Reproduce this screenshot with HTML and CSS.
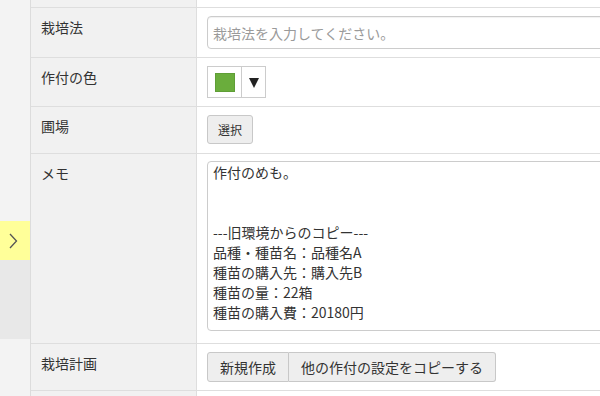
FILE: index.html
```html
<!DOCTYPE html>
<html lang="ja">

<head>
    <meta charset="UTF-8">
    <meta name="viewport" content="width=device-width, initial-scale=1.0">
    <title>作付の編集</title>
    <link rel="stylesheet" href="styles.css">
</head>

<body>
    <aside class="side">
        <div class="side-top"></div>
        <div class="side-tab">
            <svg width="10" height="16" viewBox="0 0 10 16">
                <polyline points="2,1 8.5,8 2,15" fill="none" stroke="#555" stroke-width="1.3" />
            </svg>
        </div>
        <div class="side-dark"></div>
        <div class="side-rest"></div>
    </aside>

    <main class="form-table">
        <div class="row tail">
            <div class="label"></div>
            <div class="value"></div>
        </div>

        <div class="row">
            <div class="label">栽培法</div>
            <div class="value">
                <input class="text-input" placeholder="栽培法を入力してください。">
            </div>
        </div>

        <div class="row">
            <div class="label">作付の色</div>
            <div class="value">
                <div class="color-picker">
                    <span class="swatch-box"><span class="swatch"></span></span>
                    <span class="caret">
                        <svg width="10" height="11" viewBox="0 0 10 11">
                            <polygon points="0,1 10,1 5,11" fill="#222" />
                        </svg>
                    </span>
                </div>
            </div>
        </div>

        <div class="row">
            <div class="label">圃場</div>
            <div class="value pad-field">
                <button class="btn small">選択</button>
            </div>
        </div>

        <div class="row">
            <div class="label">メモ</div>
            <div class="value pad-memo">
                <textarea class="memo">作付のめも。


---旧環境からのコピー---
品種・種苗名：品種名A
種苗の購入先：購入先B
種苗の量：22箱
種苗の購入費：20180円</textarea>
            </div>
        </div>

        <div class="row">
            <div class="label">栽培計画</div>
            <div class="value">
                <div class="btn-group">
                    <button class="btn">新規作成</button>
                    <button class="btn">他の作付の設定をコピーする</button>
                </div>
            </div>
        </div>

        <div class="row">
            <div class="label"></div>
            <div class="value"></div>
        </div>
    </main>
</body>

</html>
```

FILE: styles.css
```css
* {
    box-sizing: border-box;
    font-family: "Noto Sans CJK JP", "Noto Sans", "Liberation Sans", sans-serif;
}

body {
    margin: 0;
    display: flex;
    height: 396px;
    overflow: hidden;
    background: #fff;
    color: #333;
}

.side {
    width: 31px;
    flex-shrink: 0;
    display: flex;
    flex-direction: column;
    border-right: 1px solid #dcdcdc;
}

.side-top {
    height: 221px;
    background: #f3f3f3;
}

.side-tab {
    height: 39px;
    background: #ffff99;
    display: flex;
    align-items: center;
    padding-left: 8px;
}

.side-dark {
    height: 79px;
    background: #e8e8e8;
}

.side-rest {
    flex: 1;
    background: #f3f3f3;
}

.form-table {
    flex: 1;
    display: flex;
    flex-direction: column;
    min-width: 0;
}

.row {
    flex-shrink: 0;
    display: grid;
    grid-template-columns: 166px 1fr;
    border-bottom: 1px solid #dedede;

    &.tail {
        height: 8px;
    }

    &:last-child {
        flex: 1;
        border-bottom: none;
    }
}

.label {
    background: #f1f1f1;
    border-right: 1px solid #dedede;
    padding: 9px 10px;
    font-size: 14px;
    line-height: 20px;
}

.value {
    padding: 8px 0 8px 10px;
    overflow: hidden;

    &.pad-field {
        padding-bottom: 9px;
    }

    &.pad-memo {
        padding: 7px 0 12px 10px;
    }
}

.tail .label,
.tail .value {
    padding: 0;
}

.text-input {
    display: block;
    width: 420px;
    height: 33px;
    padding: 0 5px;
    border: 1px solid #ccc;
    border-radius: 4px;
    box-shadow: inset 0 1px 1px rgba(0, 0, 0, 0.06);
    font-size: 14px;
    color: #333;

    &::placeholder {
        color: #9a9a9a;
    }
}

.color-picker {
    display: flex;
    width: 59px;
    height: 32px;
    border: 1px solid #ccc;

    .swatch-box {
        width: 34px;
        border-right: 1px solid #ccc;
        display: flex;
        align-items: center;
        justify-content: center;
    }

    .swatch {
        width: 20px;
        height: 19px;
        background: #6aad3c;
        border: 1px solid #5f9e36;
    }

    .caret {
        flex: 1;
        display: flex;
        align-items: center;
        justify-content: center;
    }
}

.btn {
    height: 30px;
    padding: 0 12px;
    border: 1px solid #c8c8c8;
    border-radius: 3px;
    background: #eee;
    color: #333;
    font-size: 14px;
    cursor: pointer;

    &.small {
        height: 29px;
        padding: 0 10px;
        font-size: 12px;
    }
}

.btn-group {
    display: flex;

    .btn:first-child {
        border-radius: 3px 0 0 3px;
    }

    .btn:last-child {
        border-radius: 0 3px 3px 0;
        border-left: none;
        width: 207px;
    }
}

.memo {
    display: block;
    width: 420px;
    height: 170px;
    padding: 0 5px;
    border: 1px solid #ccc;
    border-radius: 4px;
    font-size: 14px;
    line-height: 20px;
    color: #333;
    resize: none;
    overflow: hidden;
}
```
